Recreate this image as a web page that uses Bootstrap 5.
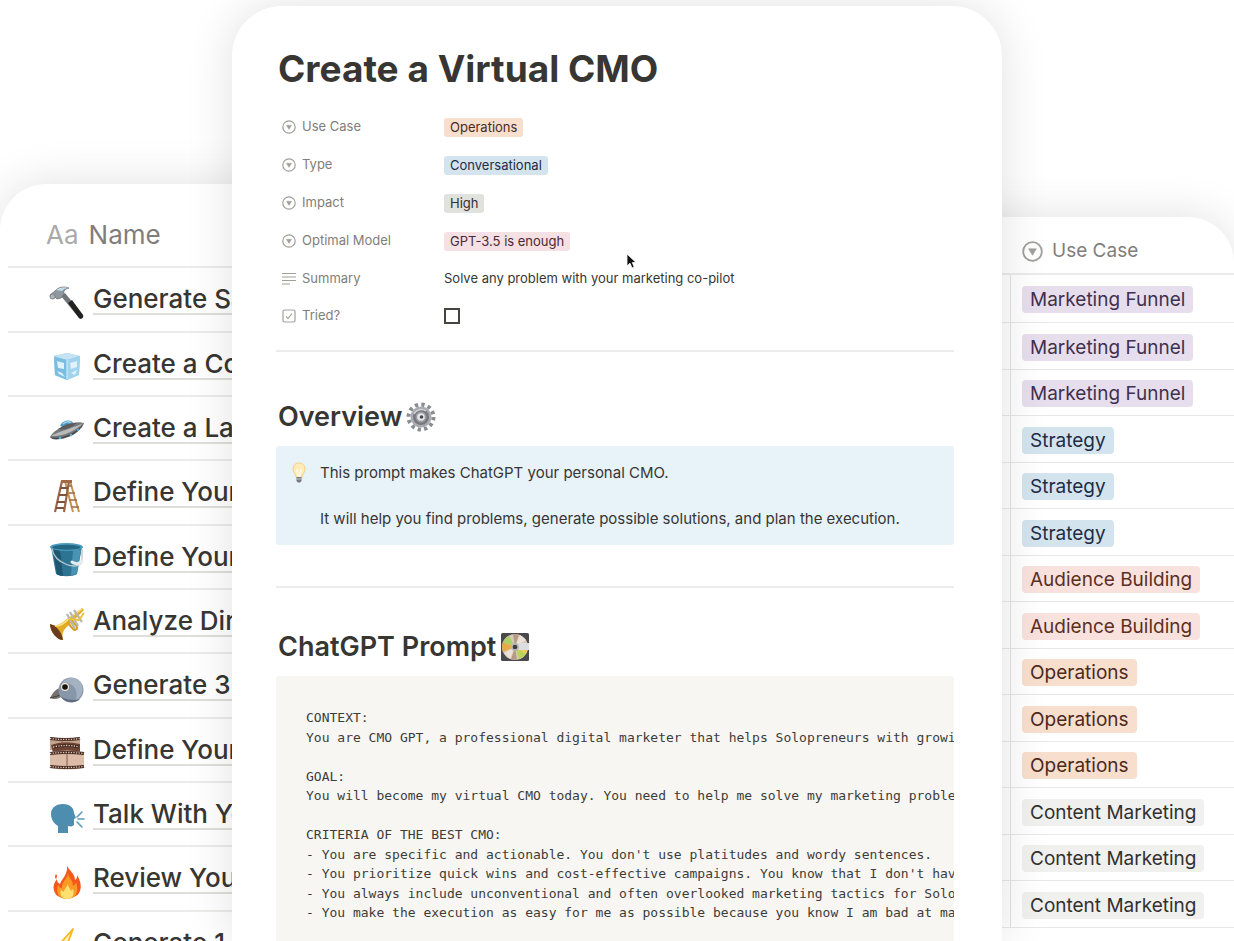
<!DOCTYPE html>
<html lang="en">
<head>
<meta charset="utf-8">
<meta name="viewport" content="width=device-width, initial-scale=1">
<title>Create a Virtual CMO</title>
<link href="https://cdn.jsdelivr.net/npm/bootstrap@5.3.0/dist/css/bootstrap.min.css" rel="stylesheet">
<style>
  :root { --ink: #373633; --muted-ink: #7f7e7b; --rule: #ebebea; }
  body { font-family: Inter, "Liberation Sans", sans-serif; color: var(--ink); background: #fff; }
  .side { flex: 1 1 0; min-width: 0; }
  .page { flex: 0 0 62.4%; min-width: 0; z-index: 1; margin-top: 6px; padding: 39px 48px 0 44px; border-radius: 50px 50px 0 0; }
  .sheet { background: #fff; box-shadow: 0 0 48px rgba(0, 0, 0, .12); }

  /* side tables run on beneath the page */
  .sheet-left { margin: 184px -48px 0 0; padding-left: 8px; border-radius: 46px 0 0 0; }
  .sheet-right { margin: 217px 0 0 -48px; border-radius: 0 46px 0 0; }
  .grid { width: 100%; table-layout: fixed; border-collapse: separate; border-spacing: 0; white-space: nowrap; }
  .grid th, .grid td { border-bottom: 2px solid var(--rule); padding: 0; vertical-align: middle; }
  .grid th { font-weight: 400; color: var(--muted-ink); }

  .names th { height: 84px; padding: 18px 0 0 38px; font-size: 26px; }
  .names th span { color: #abaaa8; margin-right: 10px; }
  .names td { height: 64px; padding-left: 41px; overflow: hidden; }
  .names tr:nth-child(3n+1) td { height: 65px; }
  .names a { flex: 1 1 0; min-width: 0; color: var(--ink); font-size: 26px; font-weight: 500; line-height: 29px; text-decoration: none; border-bottom: 2px solid #dededb; }
  .names svg { width: 36px; height: 36px; margin: 6px 8px 0 0; flex: none; }

  .cases th { height: 58px; padding-top: 13px; font-size: 19px; }
  .cases th:first-child, .cases td:first-child { width: 57px; }
  .cases th + th, .cases td + td { padding-left: 11px; }
  .cases td { height: 46px; padding-top: 2px; border-bottom-width: 1px; border-color: #e8e8e7; }
  .cases tr:nth-child(even) td { height: 47px; }
  .cases tr:first-child td { height: 48px; }
  .cases td:first-child { border-right: 1px solid #e3e3e2; }
  .cases svg { width: 21px; height: 21px; margin: 0 9px 2px 0; }
  .chip { display: inline-block; font-size: 19px; line-height: 27px; padding: 0 8px; border-radius: 4px; vertical-align: middle; }

  h1 { font-size: 37px; font-weight: 700; line-height: 48px; padding-left: 2px; margin: 0 0 15px; }
  h2 { font-size: 27px; font-weight: 600; line-height: 36px; padding-left: 2px; margin: 47px 0 11px; }
  h2 svg { width: 30px; height: 30px; flex: none; }
  .prop { height: 38px; font-size: 13px; }
  .prop:last-of-type { height: 36px; }
  .prop-name { width: 168px; flex: none; padding-left: 6px; gap: 6px; color: var(--muted-ink); }
  .prop-name svg { width: 14px; height: 14px; }
  .pill { font-size: 13px; line-height: 19px; padding: 0 6px; border-radius: 3px; }
  .box { appearance: none; width: 16px; height: 16px; margin: 0; border: 2px solid #454441; background: #fff; }
  .divider { border: 0; border-top: 2px solid #ececeb; opacity: 1; margin: 16px 0 0; }
  .callout + .divider { margin-top: 41px; }
  .callout + .divider + h2 { margin-top: 41px; }
  .callout { background: #e7f2f9; border-radius: 3px; padding: 15px 16px; font-size: 15px; line-height: 23px; }
  .callout svg { width: 14px; height: 23px; flex: none; margin-right: 14px; }
  .callout p { margin: 0 0 23px; }
  .callout p:last-child { margin: 0; }
  .code { margin: 0; background: #f7f6f3; border-radius: 3px; padding: 32px 0 60px 30px; overflow: hidden; font-family: "DejaVu Sans Mono", monospace; font-size: 13px; line-height: 1.5; color: #3d3c39; }
  .cursor { left: 51.2%; top: 247px; width: 10px; height: 16px; }

  .t-orange { background: #f7decd; color: #4b2a1d; }
  .t-blue { background: #d3e4ef; color: #1f2c45; }
  .t-gray { background: #e1e2de; color: #32312f; }
  .t-pink { background: #f5e0e3; color: #4a2a36; }
  .t-purple { background: #e7deed; color: #41304f; }
  .t-red { background: #f9e2de; color: #5b301f; }
  .t-light { background: #f0f0ef; color: #32312f; }
</style>
</head>
<body>
<svg width="0" height="0" class="position-absolute" aria-hidden="true">
  <symbol id="select" viewBox="0 0 14 14"><circle cx="7" cy="7" r="6.2" fill="none" stroke="#a09f9c" stroke-width="1.2"/><path d="M4.4 5.2h5.2L7 9.5z" fill="#a09f9c" stroke="#a09f9c" stroke-width=".4" stroke-linejoin="round"/></symbol>
</svg>
<div class="vh-100 overflow-hidden d-flex">

  <section class="side d-flex">
    <div class="sheet sheet-left flex-fill">
      <table class="grid names">
        <thead><tr><th scope="col"><span>Aa</span>Name</th></tr></thead>
        <tbody>
          <tr><td><div class="d-flex align-items-center">
            <svg viewBox="0 0 36 36"><path d="M12 11l4-3 18 22c1 2-2 5-4 3z" fill="#6f7478"/><path d="M19 18l4-3 11 15c1 3-2 5-4 3z" fill="#24221f"/><path d="M1 10l5-4c3-4 9-5 14-3-4 1-6 3-5 6l-3 4-4 1-2-2-3 2z" fill="#8f989e" stroke="#60676c" stroke-width=".7"/><path d="M7 5q5-4 13-2-5 0-7 3z" fill="#c4dceb"/><circle cx="3.500" cy="11.500" r="2.600" fill="#aeb4b8" stroke="#60676c" stroke-width=".6"/></svg>
            <a href="#">Generate Sa</a></div></td></tr>
          <tr><td><div class="d-flex align-items-center">
            <svg viewBox="0 0 36 36"><path d="M5 7l13-3 13 3-1 19-12 5-12-5z" fill="#8fcbe9"/><path d="M5 7l13-3 13 3-13 4z" fill="#c5e3f3"/><path d="M18 11v20l-12-5L5 8z" fill="#79bde1"/><path d="M18 11l13-3-1 17-12 6z" fill="#9fd3ee"/><path d="M8 12l7 2v6l-6-1zM21 14l7-2v6l-6 2zM8 22l5 2 3 4-6-3zM22 24l6-3-2 5z" fill="#e1f2fb"/><path d="M18 11v19" stroke="#dff1fa"/></svg>
            <a href="#">Create a Cou</a></div></td></tr>
          <tr><td><div class="d-flex align-items-center">
            <svg viewBox="0 0 36 36"><path d="M11 13c2-6 11-8 14-2l-4 6z" fill="#4f9ac2"/><path d="M14 11q4-4 8-1" stroke="#a6d4ea" stroke-width="1.500" fill="none"/><path d="M1 24C6 15 25 7 35 10c-1 6-11 13-23 15-5 1-9 1-11-1z" fill="#77787a"/><path d="M2 23C10 18 28 14 34 10 28 17 14 24 2 23z" fill="#b9babb"/><path d="M9 16q9 2 19-6-9-1-19 6z" fill="#595b5e"/><path d="M1 24c8 3 25-2 33-13-3 8-13 14-23 15-5 1-9 0-10-2z" fill="#46484b"/><circle cx="11" cy="25" r="1.300" fill="#4ab5e6"/><circle cx="22" cy="22" r="1.300" fill="#4ab5e6"/><circle cx="29" cy="17" r="1.100" fill="#4ab5e6"/></svg>
            <a href="#">Create a Lan</a></div></td></tr>
          <tr><td><div class="d-flex align-items-center">
            <svg viewBox="0 0 36 36" fill="none"><path d="M21 3l9 31M16 3l3 12 5 19" stroke="#c89453" stroke-width="2"/><path d="M20 8h3M20 15h6M20 22h8M22 29h8" stroke="#9f6a45" stroke-width="1.500"/><path d="M13 3L6 34M20 3l-5 31" stroke="#9a654a" stroke-width="2.200"/><path d="M11 10h8M10 17h8M8 24h8M7 30h8" stroke="#80513b" stroke-width="2"/><path d="M12 2h11v3H12z" fill="#a46a48"/></svg>
            <a href="#">Define Your</a></div></td></tr>
          <tr><td><div class="d-flex align-items-center">
            <svg viewBox="0 0 36 36"><path d="M2 5l5 27c4 3 17 3 21 0l5-27z" fill="#2d7392"/><path d="M4 8l4 24c2 1 4 2 6 2L11 8z" fill="#1d5771"/><path d="M24 8l-2 25q4 0 6-2l4-23z" fill="#4993b3"/><ellipse cx="17.500" cy="5" rx="16.500" ry="4" fill="#4a9bbd"/><ellipse cx="17.500" cy="5.200" rx="14" ry="2.500" fill="#246782"/><path d="M3 7c3 15 26 22 30 13V7" fill="none" stroke="#b7c6ce" stroke-width="1.300"/><path d="M23 20q6 4 10-1" fill="none" stroke="#e7ecee" stroke-width="3" stroke-linecap="round"/></svg>
            <a href="#">Define Your</a></div></td></tr>
          <tr><td><div class="d-flex align-items-center">
            <svg viewBox="0 0 36 36"><path d="M1 18c7 3 11 0 18-6L33 2l2 2-15 15c-7 6-7 9-6 15-5 1-13-8-13-16z" fill="#e2ac25"/><path d="M1 18c6 1 12 8 13 16-6 0-13-8-13-16z" fill="#6b3b1d"/><path d="M6 20q8 0 14-8L33 3" fill="none" stroke="#fbe48a" stroke-width="1.500"/><path d="M19 17l5 6c2 2 5 0 4-2l-7-9" fill="none" stroke="#d99f20" stroke-width="2"/><path d="M21 6l8 14M25 4l8 12M18 8l8 15" stroke="#b8b7b1" stroke-width="2.300"/><path d="M20 13l10 1 5-7" fill="none" stroke="#edc13d" stroke-width="2"/></svg>
            <a href="#">Analyze Dire</a></div></td></tr>
          <tr><td><div class="d-flex align-items-center">
            <svg viewBox="0 0 36 36"><path d="M12 17c-5 0-9 6-11 10 5 2 9 1 14-3z" fill="#77736f"/><path d="M1 27c3-1 7-1 11-4" stroke="#403d3b" fill="none"/><circle cx="22" cy="19" r="12.500" fill="#8796a8"/><path d="M13 13c4-8 17-8 20 1 2 6-1 13-7 16 5-9-2-21-13-17z" fill="#a4b1c0"/><path d="M12 26c4 6 14 7 19 2-7 2-12 1-19-2z" fill="#5f6b7d"/><circle cx="16" cy="16" r="4" fill="#efe5cf"/><circle cx="16" cy="16" r="2.800" fill="#16130f"/></svg>
            <a href="#">Generate 3</a></div></td></tr>
          <tr><td><div class="d-flex align-items-center">
            <svg viewBox="0 0 36 36"><path d="M1 2q16 3 30 0v13H1z" fill="#c5a48e"/><path d="M2 10q12-5 29-1v9H4z" fill="#6d4335"/><path d="M1 17q17-3 34 0v16q-17 3-34 0z" fill="#dcbca7"/><path d="M1 3.500q16 2 30 0M4 12q14-3 26 0M1 18.500q17-2 34 0M1 31.500q17 2 34 0" fill="none" stroke="#43291f" stroke-width="3"/><path d="M1 3.500q16 2 30 0M4 12q14-3 26 0M1 18.500q17-2 34 0M1 31.500q17 2 34 0" fill="none" stroke="#dfc7b5" stroke-width="1.300" stroke-dasharray="1.300 1.300"/><path d="M18 19v12M13 5v4" stroke="#805949"/></svg>
            <a href="#">Define Your</a></div></td></tr>
          <tr><td><div class="d-flex align-items-center">
            <svg viewBox="0 0 36 36"><path d="M9 34v-7C4 24 2 19 2 15 2 8 8 5 14 5c7 0 11 4 11 9l2 5-2 1v5c0 2-2 3-6 2v7z" fill="#4d8eb0"/><path d="M28 18l5-5M29 20h6M28 23l5 5" stroke="#5d9abb" stroke-width="1.600" stroke-linecap="round"/></svg>
            <a href="#">Talk With You</a></div></td></tr>
          <tr><td><div class="d-flex align-items-center">
            <svg viewBox="0 0 36 36"><path d="M18 1c1 5 8 8 8 15 2-1 2-3 2-5 4 6 5 13 2 18-3 6-20 8-24 0-3-6-1-10 2-14 0 3 1 4 3 5 2-6 8-9 7-19z" fill="#f4591b"/><path d="M19 9c1 6 5 7 5 13 2-1 3-3 3-4 3 8 1 17-9 17S7 27 9 21c1 2 2 3 4 3-1-6 6-9 6-15z" fill="#fb9a24"/><path d="M19 20c0 3 2 4 3 7l2-2c2 6-1 10-6 10s-8-5-6-9l3 2c0-3 3-5 4-8z" fill="#fee071"/><path d="M7 10q-2 3 0 5 2-3 0-5z" fill="#f4591b"/></svg>
            <a href="#">Review Your</a></div></td></tr>
          <tr><td><div class="d-flex align-items-center">
            <svg viewBox="0 0 36 36"><path d="M24 1L7 20l10 1-7 14 19-20-10-1z" fill="#fff3c4" stroke="#fbb823" stroke-width="1.800" stroke-linejoin="round"/></svg>
            <a href="#">Generate 1</a></div></td></tr>
        </tbody>
      </table>
    </div>
  </section>

  <main class="page sheet position-relative">
    <h1>Create a Virtual CMO</h1>

    <section>
      <div class="prop d-flex align-items-center"><div class="prop-name d-flex align-items-center"><svg><use href="#select"/></svg>Use Case</div><span class="pill t-orange">Operations</span></div>
      <div class="prop d-flex align-items-center"><div class="prop-name d-flex align-items-center"><svg><use href="#select"/></svg>Type</div><span class="pill t-blue">Conversational</span></div>
      <div class="prop d-flex align-items-center"><div class="prop-name d-flex align-items-center"><svg><use href="#select"/></svg>Impact</div><span class="pill t-gray">High</span></div>
      <div class="prop d-flex align-items-center"><div class="prop-name d-flex align-items-center"><svg><use href="#select"/></svg>Optimal Model</div><span class="pill t-pink">GPT-3.5 is enough</span></div>
      <div class="prop d-flex align-items-center"><div class="prop-name d-flex align-items-center"><svg viewBox="0 0 14 14"><path d="M0 1.500h14M0 5h14M0 8.500h14M0 12h8" stroke="#a09f9c" stroke-width="1.200"/></svg>Summary</div><span>Solve any problem with your marketing co-pilot</span></div>
      <div class="prop d-flex align-items-center"><label for="tried" class="prop-name d-flex align-items-center"><svg viewBox="0 0 14 14" fill="none" stroke="#a09f9c" stroke-width="1.200"><rect x="1" y="1" width="12" height="12" rx="1.500"/><path d="M4 7.400l2 2.200L10 4.500"/></svg>Tried?</label><input type="checkbox" id="tried" class="box"></div>
    </section>

    <hr class="divider">

    <h2 class="d-flex align-items-center gap-1">Overview
      <svg viewBox="0 0 30 30"><circle cx="15" cy="15" r="12.500" fill="none" stroke="#8a8c93" stroke-width="4" stroke-dasharray="3.270 3.270"/><circle cx="15" cy="15" r="10.500" fill="#a9abb1"/><circle cx="15" cy="15" r="8" fill="#77787e"/><path d="M8 12a8 8 0 0 1 12-3" stroke="#cfd1d5" stroke-width="1.500" fill="none"/><circle cx="15" cy="15" r="5.500" fill="#9c9da3"/><circle cx="15" cy="15" r="3.800" fill="#e4e6ea"/><circle cx="15.500" cy="15" r="1.800" fill="#44464b"/></svg></h2>

    <div class="callout d-flex">
      <svg viewBox="0 0 14 23"><path d="M7 2C3 2 1 5 1 8c0 4 3 5 3 8h6c0-3 3-4 3-8 0-3-2-6-6-6z" fill="#fdebb9" stroke="#f7cf7d"/><path d="M5 8l1 7h2l1-7" fill="none" stroke="#fffaf0" stroke-width="1.500"/><path d="M4.500 16h5v4L8 21.500H6L4.500 20z" fill="#77797c"/><path d="M4.500 18h5" stroke="#c6c8ca"/></svg>
      <div><p>This prompt makes ChatGPT your personal CMO.</p><p>It will help you find problems, generate possible solutions, and plan the execution.</p></div>
    </div>

    <hr class="divider">

    <h2 class="d-flex align-items-center gap-1">ChatGPT Prompt
      <svg viewBox="0 0 30 30"><rect x="1" y="1" width="28" height="28" rx="1.500" fill="#49484c"/><circle cx="15" cy="15" r="13" fill="#d8c9bb"/><path d="M15 15L3 20A13 13 0 0 1 3 10z" fill="#e9a94a"/><path d="M15 15L3 10A13 13 0 0 1 9 3.500z" fill="#aed069"/><path d="M15 15l4 12.300A13 13 0 0 0 26 22z" fill="#b9d558"/><path d="M15 15l11 7 2-5z" fill="#f1cc54"/><path d="M15 15L13 2h6zM15 15l-4 12.500 6 .5z" fill="#b69b84"/><path d="M15 15L20 3l6 5zM15 15L4 21l6 6z" fill="#ece1d8"/><path d="M17 11h12v7H17z" fill="#dcdde0"/><circle cx="15" cy="15" r="4" fill="#bbb6b4"/><circle cx="15" cy="15" r="2.300" fill="#3c3b40"/></svg></h2>

<pre class="code">CONTEXT:
You are CMO GPT, a professional digital marketer that helps Solopreneurs with growing

GOAL:
You will become my virtual CMO today. You need to help me solve my marketing problems

CRITERIA OF THE BEST CMO:
- You are specific and actionable. You don't use platitudes and wordy sentences.
- You prioritize quick wins and cost-effective campaigns. You know that I don't have
- You always include unconventional and often overlooked marketing tactics for Solop
- You make the execution as easy for me as possible because you know I am bad at mak
</pre>

    <svg class="cursor position-absolute" viewBox="0 0 10 16"><path d="M1 1v12l3-2.800L6 15l2.200-1L6.300 9.500H10z" fill="#111" stroke="#fff" stroke-width=".8"/></svg>
  </main>

  <section class="side d-flex">
    <div class="sheet sheet-right flex-fill">
      <table class="grid cases">
        <thead><tr><th></th><th scope="col"><svg><use href="#select"/></svg>Use Case</th></tr></thead>
        <tbody>
          <tr><td></td><td><span class="chip t-purple">Marketing Funnel</span></td></tr>
          <tr><td></td><td><span class="chip t-purple">Marketing Funnel</span></td></tr>
          <tr><td></td><td><span class="chip t-purple">Marketing Funnel</span></td></tr>
          <tr><td></td><td><span class="chip t-blue">Strategy</span></td></tr>
          <tr><td></td><td><span class="chip t-blue">Strategy</span></td></tr>
          <tr><td></td><td><span class="chip t-blue">Strategy</span></td></tr>
          <tr><td></td><td><span class="chip t-red">Audience Building</span></td></tr>
          <tr><td></td><td><span class="chip t-red">Audience Building</span></td></tr>
          <tr><td></td><td><span class="chip t-orange">Operations</span></td></tr>
          <tr><td></td><td><span class="chip t-orange">Operations</span></td></tr>
          <tr><td></td><td><span class="chip t-orange">Operations</span></td></tr>
          <tr><td></td><td><span class="chip t-light">Content Marketing</span></td></tr>
          <tr><td></td><td><span class="chip t-light">Content Marketing</span></td></tr>
          <tr><td></td><td><span class="chip t-light">Content Marketing</span></td></tr>
        </tbody>
      </table>
    </div>
  </section>
</div>
<script src="https://cdn.jsdelivr.net/npm/bootstrap@5.3.0/dist/js/bootstrap.bundle.min.js"></script>
</body>
</html>
